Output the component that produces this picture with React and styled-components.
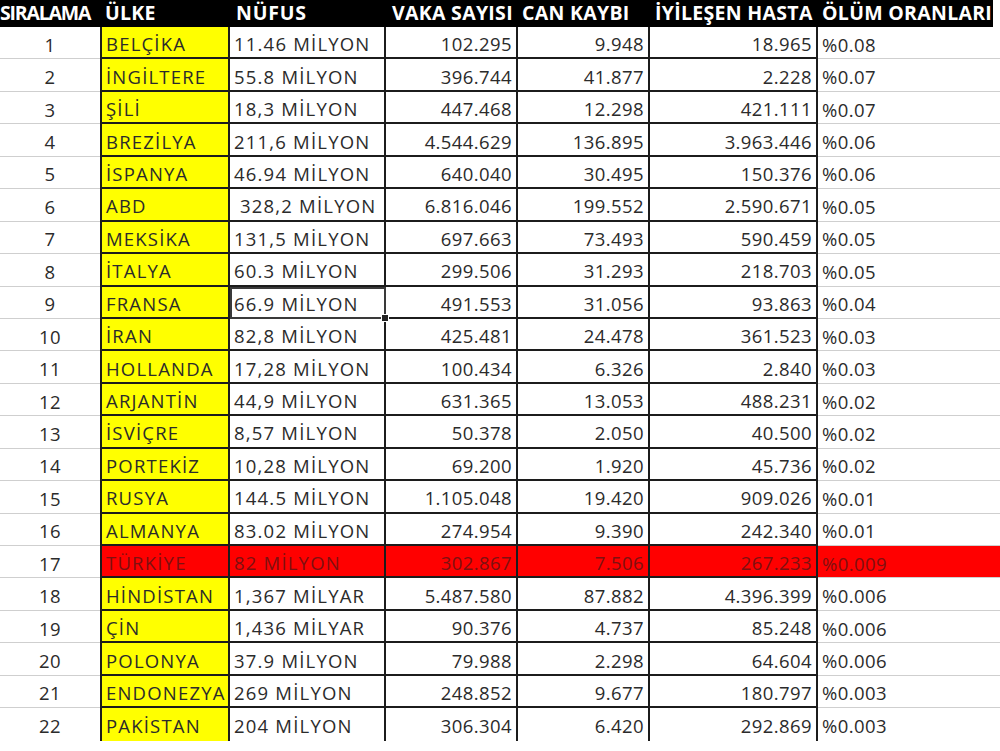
import React from "react";
import styled, { createGlobalStyle, css } from "styled-components";

const Global = createGlobalStyle`
  html, body {
    margin: 0;
    padding: 0;
    background: #fff;
  }
  body {
    font-family: "Open Sans", "DejaVu Sans", sans-serif;
  }
`;

const Sheet = styled.div`
  width: 1000px;
  display: grid;
  grid-template-columns: 100px 130px 156px 132px 132px 168px 182px;
  grid-template-rows: 27px;
  grid-auto-rows: 32.45px;
`;

const Head = styled.div`
  background: ${p => (p.$last ? "linear-gradient(90deg, #000 175px, #fff 175px)" : "#000")};
  color: #fff;
  font-weight: 700;
  font-size: 19.5px;
  letter-spacing: ${p => p.$ls || "0.3px"};
  white-space: nowrap;
  overflow: hidden;
  display: flex;
  align-items: center;
  padding: 0 0 2px ${p => p.$pad || "4px"};
  box-sizing: border-box;
`;

const grid = css`
  border-bottom: 1px solid #cfcfcf;
`;

const ruled = css`
  border-right: 2px solid #1c1c1c;
  border-bottom: 2px solid #1c1c1c;
`;

const Cell = styled.div`
  position: relative;
  box-sizing: border-box;
  display: flex;
  align-items: center;
  white-space: nowrap;
  overflow: visible;
  font-size: 18.5px;
  letter-spacing: ${p => (p.$text ? "1.2px" : "0.4px")};
  color: #2b2b2b;
  padding: 3px 4px 0 4px;
  justify-content: ${p =>
    p.$align === "right" ? "flex-end" : p.$align === "center" ? "center" : "flex-start"};
  ${p => (p.$kind === "grid" ? grid : ruled)}
  ${p => p.$left && "border-left: 2px solid #1c1c1c;"}
  ${p => p.$end && "border-bottom: none;"}
  background: ${p => (p.$fill === "yellow" ? "#ffff00" : p.$fill === "red" ? "#ff0000" : "#fff")};
  ${p => p.$fill === "red" && "color: #7e1010;"}
  ${p =>
    p.$selected &&
    css`
      outline: 2px solid #3a3a3a;
      outline-offset: -2px;
      z-index: 1;
    `}
`;

const Handle = styled.span`
  position: absolute;
  right: -5px;
  bottom: -5px;
  width: 6px;
  height: 6px;
  background: #222;
  border: 1px solid #fff;
  z-index: 2;
`;

const rows = [
  ["1", "BELÇİKA", "11.46 MİLYON", "102.295", "9.948", "18.965", "%0.08"],
  ["2", "İNGİLTERE", "55.8 MİLYON", "396.744", "41.877", "2.228", "%0.07"],
  ["3", "ŞİLİ", "18,3 MİLYON", "447.468", "12.298", "421.111", "%0.07"],
  ["4", "BREZİLYA", "211,6 MİLYON", "4.544.629", "136.895", "3.963.446", "%0.06"],
  ["5", "İSPANYA", "46.94 MİLYON", "640.040", "30.495", "150.376", "%0.06"],
  ["6", "ABD", "\u00a0328,2 MİLYON", "6.816.046", "199.552", "2.590.671", "%0.05"],
  ["7", "MEKSİKA", "131,5 MİLYON", "697.663", "73.493", "590.459", "%0.05"],
  ["8", "İTALYA", "60.3 MİLYON", "299.506", "31.293", "218.703", "%0.05"],
  ["9", "FRANSA", "66.9 MİLYON", "491.553", "31.056", "93.863", "%0.04"],
  ["10", "İRAN", "82,8 MİLYON", "425.481", "24.478", "361.523", "%0.03"],
  ["11", "HOLLANDA", "17,28 MİLYON", "100.434", "6.326", "2.840", "%0.03"],
  ["12", "ARJANTİN", "44,9 MİLYON", "631.365", "13.053", "488.231", "%0.02"],
  ["13", "İSVİÇRE", "8,57 MİLYON", "50.378", "2.050", "40.500", "%0.02"],
  ["14", "PORTEKİZ", "10,28 MİLYON", "69.200", "1.920", "45.736", "%0.02"],
  ["15", "RUSYA", "144.5 MİLYON", "1.105.048", "19.420", "909.026", "%0.01"],
  ["16", "ALMANYA", "83.02 MİLYON", "274.954", "9.390", "242.340", "%0.01"],
  ["17", "TÜRKİYE", "82 MİLYON", "302.867", "7.506", "267.233", "%0.009"],
  ["18", "HİNDİSTAN", "1,367 MİLYAR", "5.487.580", "87.882", "4.396.399", "%0.006"],
  ["19", "ÇİN", "1,436 MİLYAR", "90.376", "4.737", "85.248", "%0.006"],
  ["20", "POLONYA", "37.9 MİLYON", "79.988", "2.298", "64.604", "%0.006"],
  ["21", "ENDONEZYA", "269 MİLYON", "248.852", "9.677", "180.797", "%0.003"],
  ["22", "PAKİSTAN", "204 MİLYON", "306.304", "6.420", "292.869", "%0.003"],
];

export default function App() {
  return (
    <>
      <Global />
      <Sheet>
        <Head $pad="0px" $ls="-1.2px">SIRALAMA</Head>
        <Head $pad="5px">ÜLKE</Head>
        <Head $pad="6px" $ls="0.8px">NÜFUS</Head>
        <Head $pad="6px">VAKA SAYISI</Head>
        <Head $pad="4px">CAN KAYBI</Head>
        <Head $pad="5px">İYİLEŞEN HASTA</Head>
        <Head $pad="4px" $last>ÖLÜM ORANLARI</Head>
        {rows.map((r, i) => {
          const red = r[0] === "17";
          const fill = red ? "red" : undefined;
          const sel = r[0] === "9";
          const end = i === rows.length - 1;
          return (
            <React.Fragment key={r[0]}>
              <Cell $kind="grid" $align="center" $end={end}>{r[0]}</Cell>
              <Cell $text $left $end={end} $fill={red ? "red" : "yellow"}>{r[1]}</Cell>
              <Cell $text $end={end} $fill={fill} $selected={sel}>
                {r[2]}
                {sel && <Handle />}
              </Cell>
              <Cell $end={end} $fill={fill} $align="right">{r[3]}</Cell>
              <Cell $end={end} $fill={fill} $align="right">{r[4]}</Cell>
              <Cell $end={end} $fill={fill} $align="right">{r[5]}</Cell>
              <Cell $kind="grid" $end={end} $fill={fill}>{r[6]}</Cell>
            </React.Fragment>
          );
        })}
      </Sheet>
    </>
  );
}
